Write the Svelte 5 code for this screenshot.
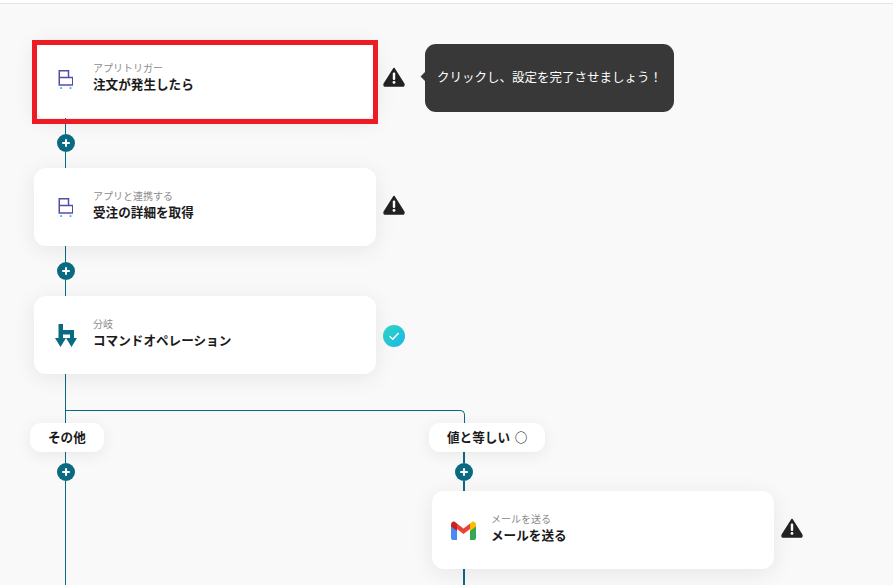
<script>
  const steps = [
    { icon: "cart", sub: "アプリトリガー", title: "注文が発生したら", status: "warn", selected: true },
    { icon: "cart", sub: "アプリと連携する", title: "受注の詳細を取得", status: "warn" },
    { icon: "branch", sub: "分岐", title: "コマンドオペレーション", status: "ok" },
  ];
</script>

{#snippet warnIcon()}
  <svg class="status warn" viewBox="0 0 22 20" width="22" height="20">
    <path d="M11 1.5 L20.8 17 Q21.4 19 19.5 19 L2.5 19 Q.6 19 1.2 17 Z" fill="#222" stroke="#222" stroke-width="1.5" stroke-linejoin="round" />
    <rect x="9.8" y="5.5" width="2.4" height="7.5" rx="1" fill="#fff" />
    <circle cx="11" cy="15.4" r="1.4" fill="#fff" />
  </svg>
{/snippet}

{#snippet okIcon()}
  <svg class="status ok" viewBox="0 0 22 22" width="22" height="22">
    <defs>
      <linearGradient id="okfill" x1="0" y1="0" x2="1" y2="1">
        <stop offset="0" stop-color="#2fd6c0" />
        <stop offset="1" stop-color="#1bb6ea" />
      </linearGradient>
    </defs>
    <circle cx="11" cy="11" r="11" fill="url(#okfill)" />
    <path d="M6.6 11.2 L9.8 14.3 L15.6 8" fill="none" stroke="#fff" stroke-width="1.5" />
  </svg>
{/snippet}

{#snippet cartIcon()}
  <svg viewBox="-0.5 0 15 19" width="15" height="19">
    <path d="M.75 .75 H10 V7.5 H.75 Z M.75 7.5 H14.25 V15 H.75 Z" fill="none" stroke="#524ea6" stroke-width="1.5" />
    <circle cx="2.7" cy="18" r="1.1" fill="#4fb6ef" />
    <circle cx="12" cy="18" r="1.1" fill="#4fb6ef" />
  </svg>
{/snippet}

{#snippet branchIcon()}
  <svg viewBox="0 0 22 23" width="22" height="23">
    <path d="M3.5 0 H8 V6 H19 V14 H22 L16.5 23 L11 14 L5.5 23 L0 14 H3.5 Z M8 10.5 V14 H11 H15 V10.5 Z" fill="#0a6a82" fill-rule="evenodd" />
  </svg>
{/snippet}

{#snippet gmailIcon()}
  <svg viewBox="0 0 25 19" width="25" height="19">
    <path d="M0 4 V17 Q0 19 2 19 H6 V8 Z" fill="#4c8bf5" />
    <path d="M19 8 V19 H23 Q25 19 25 17 V4 Z" fill="#34a853" />
    <path d="M6 8 V2.5 L12.5 7.5 L19 2.5 V8 L12.5 13 Z" fill="#ea4335" />
    <path d="M0 4 V5.5 L6 10 V2.5 L4 1 C2.4 -.2 0 1 0 4 Z" fill="#c5221f" />
    <path d="M25 4 V5.5 L19 10 V2.5 L21 1 C22.6 -.2 25 1 25 4 Z" fill="#fbbc04" />
  </svg>
{/snippet}

{#snippet card(icon, sub, title)}
  <div class="card">
    <div class="icon">
      {#if icon === "cart"}{@render cartIcon()}
      {:else if icon === "branch"}{@render branchIcon()}
      {:else}{@render gmailIcon()}{/if}
    </div>
    <div class="text">
      <span class="sub">{sub}</span>
      <span class="title">{title}</span>
    </div>
  </div>
{/snippet}

{#snippet connector(before, after)}
  <div class="connector" style="--before:{before}px;--after:{after}px">
    <span class="line before"></span>
    <span class="plus"></span>
    <span class="line after"></span>
  </div>
{/snippet}

<main class="canvas">
  {#each steps as step, i}
    <div class="step">
      {@render card(step.icon, step.sub, step.title)}
      {#if step.selected}<div class="selected"></div>{/if}
      {#if step.status === "warn"}{@render warnIcon()}{:else}{@render okIcon()}{/if}
      {#if step.selected}
        <div class="tooltip">クリックし、設定を完了させましょう！</div>
      {/if}
    </div>
    {#if i < steps.length - 1}
      {@render connector(16, 16)}
    {/if}
  {/each}

  <div class="stem"></div>
  <div class="fork"></div>

  <div class="branches">
    <div class="branch other">
      <div class="pill">その他</div>
      {@render connector(11, 10)}
      <div class="rest"></div>
    </div>
    <div class="branch equal">
      <div class="pill">値と等しい ○</div>
      {@render connector(11, 10)}
      <div class="step mail">
        {@render card("gmail", "メールを送る", "メールを送る")}
        {@render warnIcon()}
      </div>
      <div class="rest"></div>
    </div>
  </div>
</main>

<style>
  :global(body) {
    background: #fff;
    overflow: hidden;
  }

  .canvas {
    box-sizing: border-box;
    width: 893px;
    height: 582px;
    margin-top: 3px;
    padding: 36px 0 0 34px;
    overflow: hidden;
    background: #f9f9f9;
    border-top: 1px solid #e3e3e3;
    font-family: "Noto Sans CJK JP", "Noto Sans", sans-serif;
    color: #1a1a1a;
    --teal: #0a6a82;
  }

  .step {
    position: relative;
    display: flex;
    align-items: center;
    gap: 7px;
    height: 78px;
  }

  .card {
    display: flex;
    align-items: center;
    box-sizing: border-box;
    width: 342px;
    height: 78px;
    background: #fff;
    border-radius: 12px;
    box-shadow: 0 4px 22px rgba(0, 0, 0, 0.08);
  }

  .icon {
    display: flex;
    justify-content: center;
    flex: none;
    width: 51px;
    margin: 0 2px 0 6px;
  }

  .text {
    display: flex;
    flex-direction: column;
    margin-top: -4px;
  }

  .sub {
    font-size: 10px;
    line-height: 14px;
    color: #8c8c8c;
  }

  .title {
    font-size: 12.6px;
    line-height: 18px;
    font-weight: 700;
  }

  .selected {
    position: absolute;
    top: 0;
    left: -2px;
    width: 346px;
    height: 84px;
    box-sizing: border-box;
    border: 5px solid #ed1c24;
    pointer-events: none;
  }

  .status {
    flex: none;
  }

  .warn {
    margin-bottom: 4px;
  }

  .ok {
    margin-top: 2px;
  }

  .tooltip {
    position: absolute;
    left: 391px;
    top: 4px;
    display: flex;
    align-items: center;
    box-sizing: border-box;
    width: 249px;
    height: 68px;
    padding: 0 0 3px 12px;
    background: #383838;
    border-radius: 11px;
    color: #fff;
    font-size: 12.5px;
  }

  .tooltip::before {
    content: "";
    position: absolute;
    left: -3px;
    top: 29px;
    width: 7px;
    height: 7px;
    background: #383838;
    transform: rotate(45deg);
  }

  .connector {
    display: flex;
    flex-direction: column;
    align-items: center;
    width: 18px;
    margin-left: 22.5px;
  }

  .line {
    width: 1px;
    background: var(--teal);
  }

  .before {
    height: var(--before);
  }

  .after {
    height: var(--after);
  }

  .plus {
    position: relative;
    flex: none;
    width: 18px;
    height: 18px;
    border-radius: 50%;
    background: var(--teal);
  }

  .plus::before,
  .plus::after {
    content: "";
    position: absolute;
    background: #fff;
    border-radius: 1px;
  }

  .plus::before {
    left: 5px;
    top: 8px;
    width: 8px;
    height: 2px;
  }

  .plus::after {
    left: 8px;
    top: 5px;
    width: 2px;
    height: 8px;
  }

  .stem {
    width: 1px;
    height: 36px;
    margin-left: 31px;
    background: var(--teal);
  }

  .fork {
    box-sizing: border-box;
    width: 400px;
    height: 14px;
    margin-left: 31px;
    border: 1px solid var(--teal);
    border-bottom: 0;
    border-top-right-radius: 5px;
  }

  .branches {
    display: flex;
    margin-left: -4px;
  }

  .branch {
    display: flex;
    flex-direction: column;
    position: relative;
  }

  .other {
    width: 399px;
  }

  .other .connector {
    margin-left: 26.5px;
  }

  .equal .connector {
    margin-left: 26px;
  }

  .equal .line,
  .equal .rest {
    width: 2px;
  }

  .pill {
    align-self: flex-start;
    position: relative;
    z-index: 1;
    display: flex;
    align-items: center;
    justify-content: center;
    box-sizing: border-box;
    height: 29px;
    padding: 0 18px 3px;
    margin-top: -1px;
    background: #fff;
    border-radius: 11px;
    font-size: 12.6px;
    font-weight: 700;
    word-spacing: 2px;
    box-shadow: 0 3px 16px rgba(0, 0, 0, 0.07);
  }

  .mail {
    margin-left: 3px;
  }

  .rest {
    width: 1px;
    height: 120px;
    background: var(--teal);
  }

  .other .rest {
    margin-left: 35px;
  }

  .equal .rest {
    margin-left: 34px;
  }
</style>
